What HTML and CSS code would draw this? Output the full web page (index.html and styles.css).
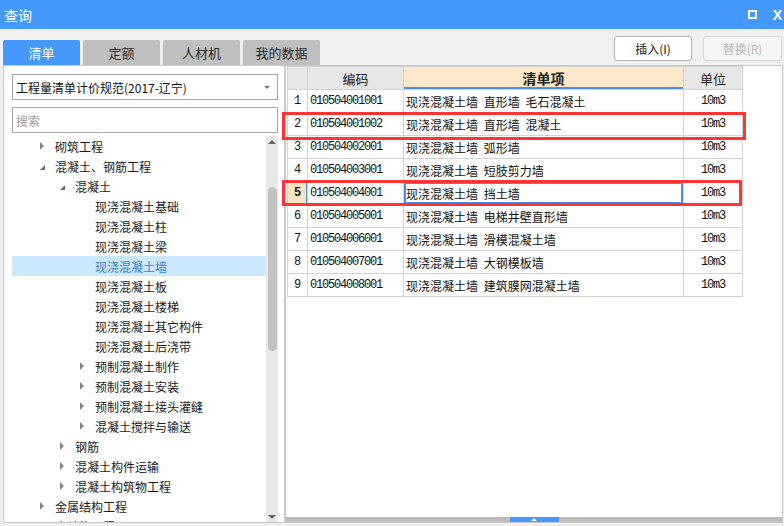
FILE: index.html
```html
<!DOCTYPE html>
<html lang="zh-CN">
<head>
<meta charset="utf-8">
<title>查询</title>
<link rel="stylesheet" href="styles.css">
</head>
<body>
<div class="titlebar">
  <span class="title">查询</span>
  <span class="ctl-max"></span>
  <span class="ctl-close">X</span>
</div>
<div class="toolbar">
  <div class="tabs">
    <div class="tab active">清单</div>
    <div class="tab">定额</div>
    <div class="tab">人材机</div>
    <div class="tab">我的数据</div>
  </div>
  <div class="actions">
    <button class="btn">插入(I)</button>
    <button class="btn disabled">替换(R)</button>
  </div>
</div>
<div class="main">
  <div class="left">
    <div class="select"><span class="select-text">工程量清单计价规范(2017-辽宁)</span><span class="caret"></span></div>
    <div class="search">搜索</div>
    <div class="treewrap">
      <div class="tree">
        <div class="node l1"><span class="tw"><i class="ar-c"></i></span>砌筑工程</div>
        <div class="node l1"><span class="tw"><i class="ar-e"></i></span>混凝土、钢筋工程</div>
        <div class="node l2"><span class="tw"><i class="ar-e"></i></span>混凝土</div>
        <div class="node l3"><span class="tw"></span>现浇混凝土基础</div>
        <div class="node l3"><span class="tw"></span>现浇混凝土柱</div>
        <div class="node l3"><span class="tw"></span>现浇混凝土梁</div>
        <div class="node l3 sel"><span class="tw"></span>现浇混凝土墙</div>
        <div class="node l3"><span class="tw"></span>现浇混凝土板</div>
        <div class="node l3"><span class="tw"></span>现浇混凝土楼梯</div>
        <div class="node l3"><span class="tw"></span>现浇混凝土其它构件</div>
        <div class="node l3"><span class="tw"></span>现浇混凝土后浇带</div>
        <div class="node l3"><span class="tw"><i class="ar-c"></i></span>预制混凝土制作</div>
        <div class="node l3"><span class="tw"><i class="ar-c"></i></span>预制混凝土安装</div>
        <div class="node l3"><span class="tw"><i class="ar-c"></i></span>预制混凝土接头灌缝</div>
        <div class="node l3"><span class="tw"><i class="ar-c"></i></span>混凝土搅拌与输送</div>
        <div class="node l2"><span class="tw"><i class="ar-c"></i></span>钢筋</div>
        <div class="node l2"><span class="tw"><i class="ar-c"></i></span>混凝土构件运输</div>
        <div class="node l2"><span class="tw"><i class="ar-c"></i></span>混凝土构筑物工程</div>
        <div class="node l1"><span class="tw"><i class="ar-c"></i></span>金属结构工程</div>
        <div class="node l1"><span class="tw"><i class="ar-c"></i></span>木结构工程</div>
      </div>
      <div class="vscroll">
        <div class="sb-btn"><i class="sb-up"></i></div>
        <div class="sb-thumb"></div>
        <div class="sb-btn sb-bottom"><i class="sb-down"></i></div>
      </div>
    </div>
  </div>
  <div class="right">
    <div class="grid-area">
      <table class="grid">
        <colgroup>
          <col class="c-num"><col class="c-code"><col class="c-name"><col class="c-unit">
        </colgroup>
        <thead>
          <tr class="hd">
            <th></th><th>编码</th><th class="hd-name">清单项</th><th>单位</th>
          </tr>
        </thead>
        <tbody>
          <tr><td class="num">1</td><td class="code">010504001001</td><td class="name">现浇混凝土墙 直形墙 毛石混凝土</td><td class="unit">10m3</td></tr>
          <tr><td class="num">2</td><td class="code">010504001002</td><td class="name">现浇混凝土墙 直形墙 混凝土</td><td class="unit">10m3</td></tr>
          <tr><td class="num">3</td><td class="code">010504002001</td><td class="name">现浇混凝土墙 弧形墙</td><td class="unit">10m3</td></tr>
          <tr><td class="num">4</td><td class="code">010504003001</td><td class="name">现浇混凝土墙 短肢剪力墙</td><td class="unit">10m3</td></tr>
          <tr class="cur"><td class="num">5</td><td class="code">010504004001</td><td class="name focus">现浇混凝土墙 挡土墙</td><td class="unit">10m3</td></tr>
          <tr><td class="num">6</td><td class="code">010504005001</td><td class="name">现浇混凝土墙 电梯井壁直形墙</td><td class="unit">10m3</td></tr>
          <tr><td class="num">7</td><td class="code">010504006001</td><td class="name">现浇混凝土墙 滑模混凝土墙</td><td class="unit">10m3</td></tr>
          <tr><td class="num">8</td><td class="code">010504007001</td><td class="name">现浇混凝土墙 大钢模板墙</td><td class="unit">10m3</td></tr>
          <tr><td class="num">9</td><td class="code">010504008001</td><td class="name">现浇混凝土墙 建筑膜网混凝土墙</td><td class="unit">10m3</td></tr>
        </tbody>
      </table>
    </div>
    <div class="hscroll"><div class="hs-handle"><i class="hs-up"></i></div></div>
  </div>
</div>
<div class="mark mark-a"></div>
<div class="mark mark-b"></div>
</body>
</html>
```

FILE: styles.css
```css
* { box-sizing: border-box; }
html, body { margin: 0; padding: 0; }
body {
  width: 784px;
  height: 526px;
  overflow: hidden;
  background: #f0f0f0;
  font-family: "Noto Sans CJK SC", "Liberation Sans", sans-serif;
  color: #1a1a1a;
  position: relative;
}

/* title bar */
.titlebar {
  height: 29px;
  background: #4599fd;
  color: #fff;
  display: flex;
  align-items: center;
  padding: 0 2px 0 4px;
  font-size: 14px;
}
.title { flex: 1; }
.ctl-max {
  width: 9px;
  height: 9px;
  border: 2px solid #fff;
  margin-right: 16px;
}
.ctl-close {
  font: bold 14px "Liberation Sans", sans-serif;
  line-height: 1;
}

/* toolbar */
.toolbar {
  height: 36px;
  display: flex;
  padding: 0 2px 0 3px;
}
.tabs {
  display: flex;
  gap: 3px;
  align-self: flex-end;
}
.tab {
  width: 77px;
  height: 25px;
  background: #bfbfbf;
  color: #2a2a2a;
  font-size: 13px;
  display: flex;
  align-items: center;
  justify-content: center;
  border-radius: 2px 2px 0 0;
}
.tab.active { background: #4599fd; color: #fff; }
.actions {
  margin-left: auto;
  display: flex;
  gap: 11px;
  padding-top: 7px;
}
.btn {
  width: 78px;
  height: 25px;
  border: 1px solid #b4b4b4;
  background: #fff;
  border-radius: 3px;
  font-family: "Noto Sans CJK SC", sans-serif;
  font-size: 12px;
  color: #222;
  padding: 0;
}
.btn.disabled {
  width: 79px;
  border-color: #d6d6d6;
  color: #b9b9b9;
  background: #f6f6f6;
}

/* main */
.main {
  display: flex;
  height: 458px;
  padding-left: 3px;
}
.left {
  width: 282px;
  border: 1px solid #c9c9c9;
  background: #fff;
  padding: 8px 6px 0 8px;
  display: flex;
  flex-direction: column;
}
.select {
  height: 26px;
  border: 1px solid #a8a8a8;
  display: flex;
  align-items: center;
  padding: 0 7px 0 3px;
  font-size: 12px;
  color: #111;
}
.select-text { flex: 1; }
.caret {
  width: 0;
  height: 0;
  border-left: 3px solid transparent;
  border-right: 3px solid transparent;
  border-top: 3px solid #7a7a7a;
}
.search {
  margin-top: 7px;
  height: 26px;
  border: 1px solid #a8a8a8;
  display: flex;
  align-items: center;
  padding-left: 3px;
  font-size: 12px;
  color: #a0a0a0;
}
.treewrap {
  margin-top: 3px;
  flex: 1;
  display: flex;
  overflow: hidden;
}
.tree {
  flex: 1;
  overflow: hidden;
}
.node {
  height: 20px;
  display: flex;
  align-items: center;
  font-size: 12px;
  color: #1a1a1a;
  white-space: nowrap;
}
.node.l1 { padding-left: 28px; }
.node.l2 { padding-left: 48px; }
.node.l3 { padding-left: 68px; }
.node.sel { background: #cce8ff; color: #3b80d6; }
.tw {
  width: 15px;
  height: 20px;
  display: flex;
  align-items: center;
  flex: none;
}
.ar-c {
  width: 0;
  height: 0;
  border-left: 4px solid #858585;
  border-top: 4px solid transparent;
  border-bottom: 4px solid transparent;
}
.ar-e {
  width: 0;
  height: 0;
  border-right: 5px solid #6e6e6e;
  border-top: 5px solid transparent;
  margin-top: 2px;
}
.vscroll {
  width: 12px;
  background: #e8e8e8;
  display: flex;
  flex-direction: column;
  align-items: center;
}
.sb-btn {
  height: 12px;
  width: 12px;
  display: flex;
  align-items: center;
  justify-content: center;
}
.sb-bottom { margin-top: auto; height: 10px; }
.sb-up {
  width: 0; height: 0;
  border-left: 4px solid transparent;
  border-right: 4px solid transparent;
  border-bottom: 4px solid #666;
}
.sb-down {
  width: 0; height: 0;
  border-left: 4px solid transparent;
  border-right: 4px solid transparent;
  border-top: 4px solid #666;
}
.sb-thumb {
  margin-top: 39px;
  width: 9px;
  height: 164px;
  border-radius: 5px;
  background: #c2c2c2;
}

/* right grid */
.right {
  width: 498px;
  border: 1px solid #c9c9c9;
  background: #fff;
  display: flex;
  flex-direction: column;
}
.grid-area {
  flex: 1;
  padding-left: 1px;
}
.grid {
  border-collapse: collapse;
  table-layout: fixed;
  width: 456px;
}
.c-num { width: 20px; }
.c-code { width: 96px; }
.c-name { width: 280px; }
.c-unit { width: 59px; }
.grid tr { height: 23px; }
.grid th, .grid td {
  border: 1px solid #d3d3d3;
  padding: 0 2px;
  white-space: nowrap;
  overflow: hidden;
}
.grid th {
  background: #e7e7e7;
  font-weight: normal;
  font-size: 13px;
  color: #222;
}
.grid th.hd-name {
  background: #fde9c9;
  font-weight: bold;
  font-size: 14px;
  box-shadow: inset 0 -2px 0 #4b92e6;
}
.grid td { font-size: 12px; color: #111; }
.grid td.num, .grid td.code, .grid td.unit {
  font-family: "Liberation Mono", monospace;
  font-size: 12px;
  letter-spacing: -1.2px;
}
.grid td.num { text-align: center; padding: 0; letter-spacing: 0; }
.grid td.unit { text-align: center; }
.grid td.name { word-spacing: 3px; }
.grid tr.cur td.num {
  background: #fde4c3;
  font-weight: bold;
  box-shadow: inset -1px 0 0 #4b92e6;
}
.grid td.focus { box-shadow: inset 0 0 0 2px #4b92e6; }

.hscroll {
  height: 5px;
  background: #bdbdbd;
  display: flex;
  justify-content: center;
}
.hs-handle {
  width: 49px;
  background: #4599fd;
  display: flex;
  justify-content: center;
  align-items: center;
}
.hs-up {
  width: 0; height: 0;
  border-left: 3px solid transparent;
  border-right: 3px solid transparent;
  border-bottom: 3px solid #fff;
}

/* annotation boxes */
.mark {
  position: absolute;
  border: 3px solid #ff3434;
}
.mark-a { left: 282px; top: 112px; width: 464px; height: 28px; }
.mark-b { left: 282px; top: 180px; width: 460px; height: 26px; }
```
